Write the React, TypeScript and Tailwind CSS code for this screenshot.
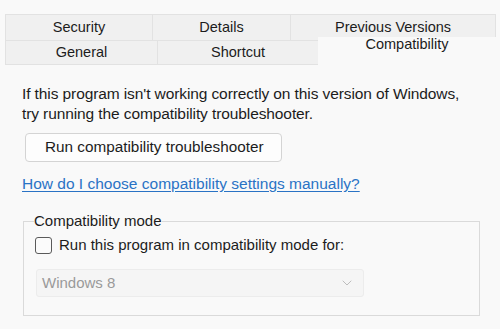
import { ChevronDown } from "lucide-react";

const topTabs = [
  { label: "Security", w: "w-[147px]" },
  { label: "Details", w: "w-[138px]" },
  { label: "Previous Versions", w: "flex-1" },
];

const bottomTabs = [
  { label: "General", w: "w-[152px]", active: false },
  { label: "Shortcut", w: "w-[161px]", active: false },
  { label: "Compatibility", w: "flex-1", active: true },
];

export default function App() {
  return (
    <div className="w-[500px] h-[329px] overflow-hidden bg-[#f9f9f9] pt-[14px] font-['Liberation_Sans',Arial,sans-serif] text-[#1c1c1c]">
      {/* Tabs */}
      <div className="pl-[5px] pr-[4px] text-[14.5px]">
        <div className="flex h-[27px] border-y border-[#e2e2e2] bg-[#f0f0f0]">
          {topTabs.map((t, i) => (
            <div
              key={t.label}
              className={`${t.w} flex items-center justify-center border-l border-[#e2e2e2] ${i === topTabs.length - 1 ? "border-r" : ""}`}
            >
              {t.label}
            </div>
          ))}
        </div>
        <div className="flex h-[24px]">
          {bottomTabs.map((t) =>
            t.active ? (
              <div
                key={t.label}
                className={`${t.w} relative z-10 -mt-[4px] h-[28px] flex items-start justify-center leading-[14px] bg-[#f9f9f9]`}
              >
                {t.label}
              </div>
            ) : (
              <div
                key={t.label}
                className={`${t.w} flex items-center justify-center bg-[#f0f0f0] border-l border-b border-[#e2e2e2]`}
              >
                {t.label}
              </div>
            )
          )}
        </div>
      </div>

      {/* Body */}
      <div className="px-[22px] pt-[19px]">
        <p className="text-[15.5px] leading-[19.5px] tracking-[-0.1px]">
          If this program isn't working correctly on this version of Windows,
          <br />
          try running the compatibility troubleshooter.
        </p>

        <button className="mt-[10px] ml-[3px] h-[29px] w-[257px] rounded-[4px] border border-[#d4d4d4] bg-[#fdfdfd] text-left pl-[19px] text-[15.3px] text-[#1c1c1c]">
          Run compatibility troubleshooter
        </button>

        <div className="mt-[10px] leading-[23px]">
          <a href="#" className="text-[#2a73c5] underline underline-offset-2 text-[15.5px]">
            How do I choose compatibility settings manually?
          </a>
        </div>

        {/* Group box */}
        <fieldset className="mt-[18px] ml-[1px] w-[457px] border border-[#dadada] px-[11px] pb-[18px]">
          <legend className="px-0 text-[15px] leading-[16px] -ml-[1px]">Compatibility mode</legend>
          <label className="flex items-center gap-[7px] mt-[7px] leading-[18px]">
            <span className="w-[17px] h-[17px] rounded-[3px] border border-[#5a5a5a] bg-[#fbfbfb]" />
            <span className="text-[15px]">Run this program in compatibility mode for:</span>
          </label>
          <div className="mt-[15px] ml-[1px] w-[328px] h-[28px] flex items-center justify-between rounded-[3px] border border-[#ececec] bg-[#f5f5f5] pl-[5px] pr-[8px]">
            <span className="text-[#9a9a9a] text-[15px]">Windows 8</span>
            <ChevronDown className="w-[16px] h-[16px] text-[#bdbdbd]" strokeWidth={1.5} />
          </div>
        </fieldset>
      </div>
    </div>
  );
}
